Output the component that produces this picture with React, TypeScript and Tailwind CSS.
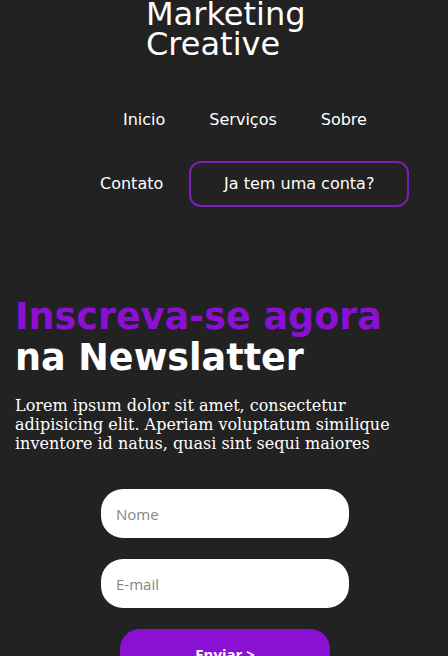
import React from "react";

const NavLink = ({ label }: { label: string }) => (
  <a href="#" className="text-white text-[16px] leading-[24px]">
    {label}
  </a>
);

const Field = ({ placeholder }: { placeholder: string }) => (
  <input
    type="text"
    placeholder={placeholder}
    className="w-[248px] h-[49px] rounded-[22px] bg-white px-[15px] text-[15px] text-gray-800 placeholder:text-[#858585] outline-none font-['Open_Sans',sans-serif]"
  />
);

export default function App() {
  return (
    <div className="min-h-screen w-full bg-[#222222] overflow-hidden font-['DejaVu_Sans',sans-serif]">
      <header>
        <h1 className="pl-[146px] -mt-[1px] text-white text-[32px] leading-[30px] font-normal">
          Marketing
          <br />
          Creative
        </h1>

        <nav className="mt-[49px] flex flex-col">
          <div className="flex pl-[123px] gap-[44px] h-[24px] items-center">
            <NavLink label="Inicio" />
            <NavLink label="Serviços" />
            <NavLink label="Sobre" />
          </div>
          <div className="flex pl-[100px] mt-[29px] items-center">
            <NavLink label="Contato" />
            <button className="ml-[26px] w-[220px] h-[46px] rounded-[12px] border-2 border-[#7b1fb8] text-white text-[16px]">
              Ja tem uma conta?
            </button>
          </div>
        </nav>
      </header>

      <section className="px-[15px] mt-[89px]">
        <h2 className="text-[36.5px] leading-[41px] font-bold">
          <span className="text-[#8a10d3]">Inscreva-se agora</span>
          <br />
          <span className="text-white">na Newslatter</span>
        </h2>
        <p className="mt-[18px] text-white text-[16px] font-['DejaVu_Serif',serif] leading-[19px]">
          Lorem ipsum dolor sit amet, consectetur adipisicing elit. Aperiam
          voluptatum similique inventore id natus, quasi sint sequi maiores
        </p>
      </section>

      <form className="mt-[36px] flex flex-col items-center gap-[21px] pl-[2px]">
        <Field placeholder="Nome" />
        <Field placeholder="E-mail" />
        <button
          type="button"
          className="w-[210px] h-[50px] rounded-[20px] bg-[#8a10d3] text-white text-[15px] font-bold font-['Open_Sans',sans-serif]"
        >
          Enviar &gt;
        </button>
      </form>
    </div>
  );
}
